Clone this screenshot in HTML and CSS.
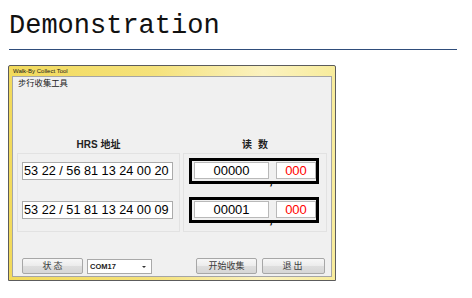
FILE: index.html
```html
<!DOCTYPE html>
<html lang="zh-CN">
<head>
  <meta charset="UTF-8">
  <meta name="viewport" content="width=device-width, initial-scale=1.0">
  <title>Demonstration</title>
  <link rel="stylesheet" href="styles.css">
</head>
<body>

<h1 class="heading">Demonstration</h1>
<hr class="rule">

<div class="window">
  <div class="titlebar">Walk-By Collect Tool</div>
  <div class="client">
    <div class="caption">步行收集工具</div>

    <div class="labels">
      <span>HRS 地址</span>
      <span class="read-label">读 数</span>
    </div>

    <div class="panels">
      <div class="panel panel-addr">
        <div class="addr">53 22 / 56 81 13 24 00 20</div>
        <div class="addr">53 22 / 51 81 13 24 00 09</div>
      </div>
      <div class="panel panel-read">
        <div class="reading">
          <span class="count">00000</span>
          <span class="sep">,</span>
          <span class="frac">000</span>
        </div>
        <div class="reading">
          <span class="count">00001</span>
          <span class="sep">,</span>
          <span class="frac">000</span>
        </div>
      </div>
    </div>

    <div class="actions">
      <button class="btn btn-state">状 态</button>
      <div class="combo">COM17<span class="arrow"></span></div>
      <button class="btn btn-start">开始收集</button>
      <button class="btn btn-exit">退出</button>
    </div>
  </div>
</div>

</body>
</html>
```

FILE: styles.css
```css
/* Page */
body {
  margin: 0;
  background: #fff;
  font-family: "Liberation Sans", Arial, sans-serif;
}
.heading {
  margin: 11px 0 0 9px;
  font: normal 27px/30px "Liberation Mono", "Courier New", monospace;
  color: #111;
}
.rule {
  margin: 8px 15px 0 9px;
  height: 1px;
  border: 0;
  background: #2f4d7b;
}

/* Window frame */
.window {
  margin: 15px 0 0 8px;
  width: 328px;
  height: 216px;
  box-sizing: border-box;
  border: 1px solid #5c5c5c;
  border-radius: 2px 2px 0 0;
  padding: 0 3px 3px;
  display: flex;
  flex-direction: column;
  background: linear-gradient(to right, #f2da5c 0%, #f5e27c 45%, #fbf2c0 78%, #f8ec9c 100%);
}
.titlebar {
  height: 10px;
  padding-left: 1px;
  font-size: 6px;
  line-height: 10px;
  color: #1a1a1a;
}
.client {
  flex: 1;
  border: 1px solid #a5a5a5;
  background: #f0f0f0;
  padding: 0 4px;
  display: flex;
  flex-direction: column;
}
.caption {
  padding-left: 1px;
  font: 8.3px/11px "Noto Sans CJK SC", sans-serif;
  color: #222;
}

/* Columns */
.labels,
.panels {
  display: grid;
  grid-template-columns: 163px 144px;
  column-gap: 3px;
}
.labels {
  margin-top: 51px;
  height: 12px;
  font: bold 10px/12px "Liberation Sans", "Noto Sans CJK SC", sans-serif;
  color: #222;
  text-align: center;
}
.read-label {
  word-spacing: 3px;
}
.panels {
  margin-top: 2px;
  height: 79px;
}
.panel {
  border: 1px solid #e2e2e2;
  display: flex;
  flex-direction: column;
}
.panel-addr {
  padding: 8px 0 0 4px;
  gap: 21px;
}
.addr {
  width: 151px;
  height: 18px;
  box-sizing: border-box;
  padding: 0 1px;
  border: 1px solid #ababab;
  background: #fff;
  font-size: 12.7px;
  line-height: 16px;
  color: #000;
  white-space: nowrap;
}
.panel-read {
  padding: 4px 0 0 5px;
  gap: 13px;
}
.reading {
  position: relative;
  width: 130px;
  height: 26px;
  box-sizing: border-box;
  border: 3px solid #000;
  padding: 1px 0 0 2px;
  display: flex;
  align-items: flex-start;
}
.count,
.frac {
  height: 17px;
  box-sizing: border-box;
  border: 1px solid #b9b9b9;
  background: #fff;
  font-size: 13px;
  line-height: 15px;
  text-align: center;
}
.count {
  width: 75px;
}
.frac {
  width: 40px;
  margin-left: 7px;
  color: #ff0000;
}
.sep {
  position: absolute;
  left: 77px;
  top: 11px;
  font: bold 14px/14px "Liberation Sans", Arial, sans-serif;
  color: #000;
}

/* Bottom buttons */
.actions {
  margin-top: 26px;
  padding-left: 5px;
  padding-right: 2px;
  height: 16px;
  display: flex;
  align-items: center;
}
.btn {
  height: 16px;
  padding: 0;
  border: 1px solid #a7a7a7;
  border-radius: 2px;
  background: linear-gradient(#f7f7f7, #ececec 48%, #dedede 52%, #d6d6d6);
  font: 9px/14px "Noto Sans CJK SC", sans-serif;
  color: #3c3c3c;
}
.btn-state {
  width: 61px;
}
.btn-start {
  width: 61px;
  margin-left: auto;
}
.btn-exit {
  width: 63px;
  margin-left: 5px;
  letter-spacing: 2px;
}
.combo {
  position: relative;
  width: 65px;
  height: 15px;
  margin-left: 4px;
  box-sizing: border-box;
  border: 1px solid #a9a9a9;
  background: #fff;
  padding-left: 2px;
  font: bold 7.5px/13px "Liberation Sans", Arial, sans-serif;
  color: #222;
}
.arrow {
  position: absolute;
  right: 5px;
  top: 6px;
  border-left: 2px solid transparent;
  border-right: 2px solid transparent;
  border-top: 2px solid #333;
}
```
